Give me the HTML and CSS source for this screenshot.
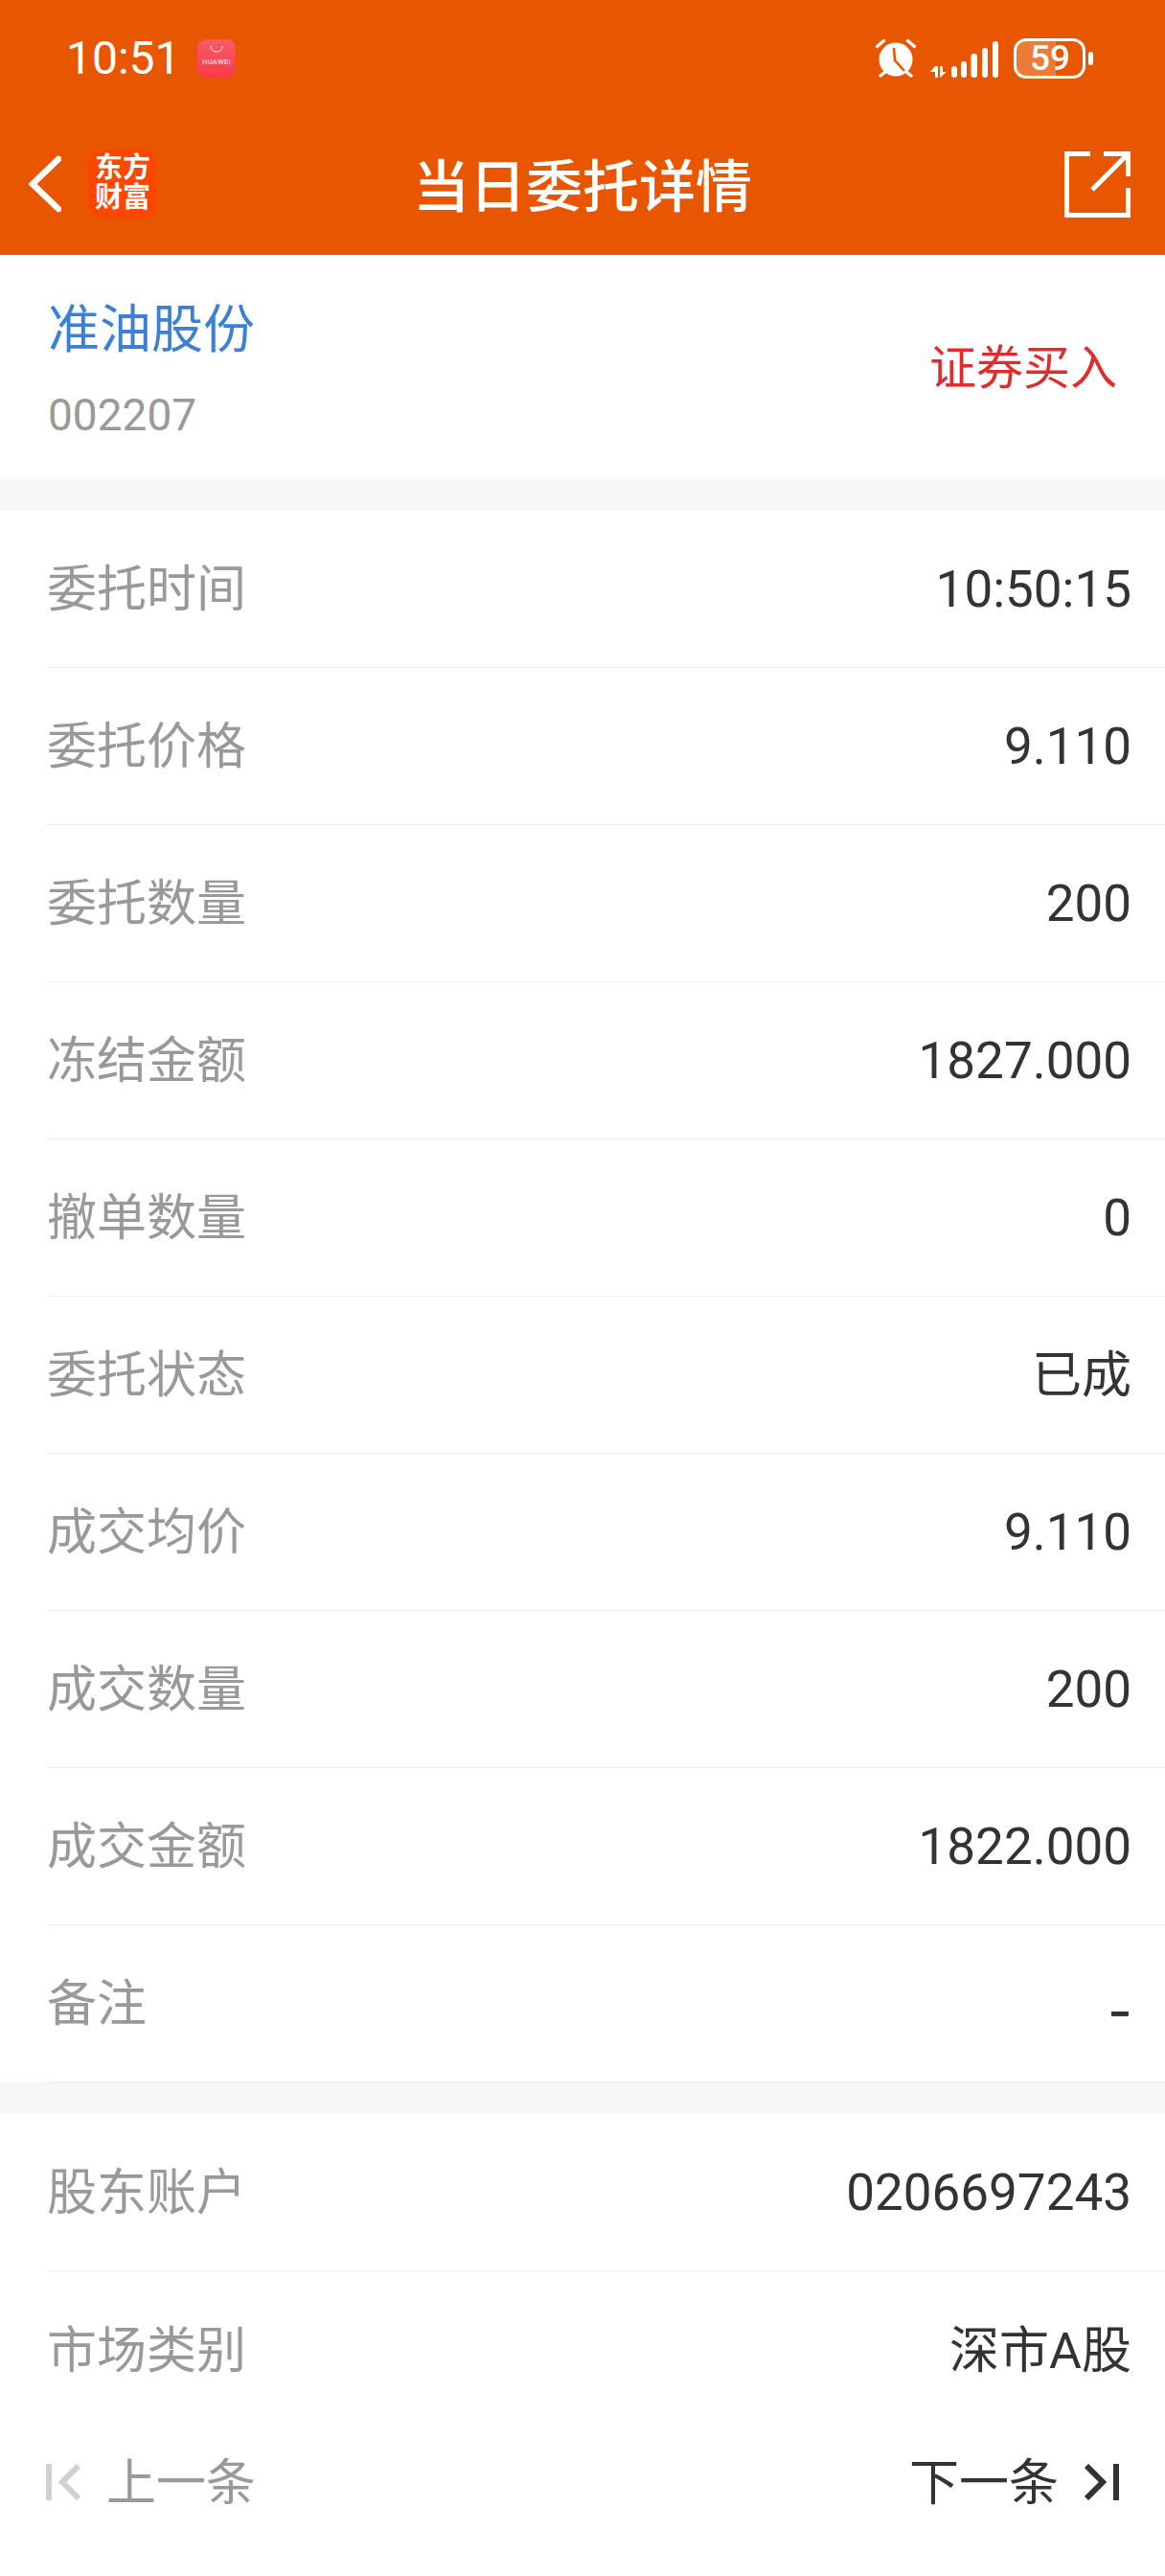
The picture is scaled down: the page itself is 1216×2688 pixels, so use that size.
FILE: index.html
```html
<!DOCTYPE html>
<html lang="zh-CN">
<head>
    <meta charset="UTF-8">
    <meta name="viewport" content="width=device-width, initial-scale=1.0">
    <title>当日委托详情</title>
    <link rel="stylesheet" href="styles.css">
</head>
<body>
    <div class="phone">
        <header class="top">
            <div class="status-bar">
                <div class="status-left">
                    <span class="clock">10:51</span>
                    <span class="store-icon">
                        <svg viewBox="0 0 40 40" width="40" height="40">
                            <defs>
                                <linearGradient id="storeFill" x1="0" y1="0" x2="0" y2="1">
                                    <stop offset="0" stop-color="#fb5a68"/>
                                    <stop offset="1" stop-color="#f93a48"/>
                                </linearGradient>
                            </defs>
                            <rect width="40" height="40" rx="9" fill="url(#storeFill)"/>
                            <path d="M14 7c0 8 12 8 12 0" fill="none" stroke="#fff" stroke-width="1"/>
                            <text x="20" y="26" class="store-label">HUAWEI</text>
                        </svg>
                    </span>
                </div>
                <div class="status-right">
                    <svg class="alarm" viewBox="0 0 42 42" width="42" height="42">
                        <circle cx="21" cy="22" r="17.5" fill="#fff"/>
                        <path d="M1.5 8.5 8.5 2.5M40.5 8.5 33.5 2.5M5 39l5-4M37 39l-5-4" stroke="#fff" stroke-width="3.4" stroke-linecap="round"/>
                        <path d="M19 10l1 13 10 11" fill="none" stroke="#e85600" stroke-width="2.6"/>
                    </svg>
                    <svg class="signal" viewBox="0 0 71 40" width="71" height="40">
                        <path d="M5 27h3v12H5V33H0ZM10 27h3v6h4L10 39Z" fill="#fff"/>
                        <rect x="22" y="27" width="6" height="12" rx="3" fill="#fff"/>
                        <rect x="32" y="22" width="6" height="17" rx="3" fill="#fff"/>
                        <rect x="42.5" y="14" width="6.5" height="25" rx="3" fill="#fff"/>
                        <rect x="54" y="8" width="6" height="31" rx="3" fill="#fff"/>
                        <rect x="65" y="1" width="6" height="38" rx="3" fill="#fff"/>
                    </svg>
                    <span class="battery">
                        <span class="battery-body">
                            <span class="battery-level"></span>
                            <span class="battery-num">59</span>
                        </span>
                        <span class="battery-cap"></span>
                    </span>
                </div>
            </div>
            <div class="nav-bar">
                <div class="nav-left">
                    <svg class="back" viewBox="0 0 36 60" width="36" height="60">
                        <path d="M33 4 6 30l27 26" fill="none" stroke="#fff" stroke-width="6.5" stroke-linecap="round" stroke-linejoin="miter"/>
                    </svg>
                    <span class="app-logo">东方<br>财富</span>
                </div>
                <h1 class="nav-title">当日委托详情</h1>
                <svg class="share" viewBox="0 0 69 69" width="69" height="69">
                    <path d="M27 2.500H2.500V66.500H66.500V38M41 2.500H66.500V26M66.500 2.500 29 40" fill="none" stroke="#fff" stroke-width="5"/>
                </svg>
            </div>
        </header>

        <section class="stock">
            <div class="stock-info">
                <div class="stock-name">准油股份</div>
                <div class="stock-code">002207</div>
            </div>
            <div class="stock-side">证券买入</div>
        </section>

        <section class="group">
            <div class="row"><span class="label">委托时间</span><span class="value">10:50:15</span></div>
            <div class="row"><span class="label">委托价格</span><span class="value">9.110</span></div>
            <div class="row"><span class="label">委托数量</span><span class="value">200</span></div>
            <div class="row"><span class="label">冻结金额</span><span class="value">1827.000</span></div>
            <div class="row"><span class="label">撤单数量</span><span class="value">0</span></div>
            <div class="row"><span class="label">委托状态</span><span class="value value-cjk">已成</span></div>
            <div class="row"><span class="label">成交均价</span><span class="value">9.110</span></div>
            <div class="row"><span class="label">成交数量</span><span class="value">200</span></div>
            <div class="row"><span class="label">成交金额</span><span class="value">1822.000</span></div>
            <div class="row"><span class="label">备注</span><span class="value value-dash">-</span></div>
        </section>

        <section class="group">
            <div class="row"><span class="label">股东账户</span><span class="value">0206697243</span></div>
            <div class="row"><span class="label">市场类别</span><span class="value value-cjk">深市A股</span></div>
        </section>

        <footer class="pager">
            <div class="pager-item prev">
                <svg viewBox="0 0 36 38" width="36" height="38">
                    <path d="M3 0V38" stroke="#d0d0d0" stroke-width="6"/>
                    <path d="M34 2 17 19l17 17" fill="none" stroke="#d0d0d0" stroke-width="6"/>
                </svg>
                <span>上一条</span>
            </div>
            <div class="pager-item next">
                <span>下一条</span>
                <svg viewBox="0 0 36 38" width="36" height="38">
                    <path d="M33 0V38" stroke="#333" stroke-width="6"/>
                    <path d="M2 2 19 19 2 36" fill="none" stroke="#333" stroke-width="6"/>
                </svg>
            </div>
        </footer>
    </div>
</body>
</html>
```

FILE: styles.css
```css
* {
    box-sizing: border-box;
}
body {
    margin: 0;
    background: #fff;
    font-family: Roboto, "Noto Sans CJK SC", sans-serif;
}
.phone {
    width: 1216px;
    height: 2688px;
    display: flex;
    flex-direction: column;
    overflow: hidden;
}

/* orange header */
.top {
    height: 266px;
    background: #e85600;
    color: #fff;
}
.status-bar {
    height: 124px;
    padding: 40px 75px 0 69px;
    display: flex;
    justify-content: space-between;
    align-items: flex-start;
}
.status-left {
    display: flex;
    align-items: center;
    gap: 17px;
}
.clock {
    font-size: 48px;
    line-height: 42px;
}
.store-icon {
    display: block;
    height: 40px;
}
.store-label {
    font-family: Roboto, sans-serif;
    font-size: 7.5px;
    letter-spacing: 0.4px;
    fill: #fff;
    text-anchor: middle;
}
.status-right {
    display: flex;
    align-items: flex-end;
}
.alarm {
    margin-right: 15px;
}
.signal {
    margin-right: 16px;
}
.battery {
    display: flex;
    align-items: center;
    gap: 3px;
    height: 42px;
}
.battery-body {
    position: relative;
    display: block;
    width: 75px;
    height: 42px;
    border: 3px solid #fff;
    border-radius: 13px;
    overflow: hidden;
}
.battery-level {
    position: absolute;
    left: 0;
    top: 0;
    bottom: 0;
    width: 59%;
    background: rgba(255, 255, 255, 0.22);
}
.battery-num {
    position: relative;
    display: block;
    padding-left: 14px;
    font-size: 37px;
    line-height: 36px;
    font-weight: 500;
}
.battery-cap {
    width: 5px;
    height: 14px;
    background: #fff;
    border-radius: 3px;
}
.nav-bar {
    position: relative;
    height: 142px;
    padding: 0 36px 0 28px;
    display: flex;
    justify-content: space-between;
    align-items: center;
    margin-top: -3px;
}
.nav-left {
    display: flex;
    align-items: center;
    gap: 28px;
}
.app-logo {
    width: 72px;
    height: 72px;
    background: #fb4700;
    border-radius: 14px;
    font-size: 29px;
    line-height: 31px;
    font-weight: 700;
    text-align: center;
    padding-top: 4px;
}
.nav-title {
    position: absolute;
    left: 0;
    right: 0;
    margin: 0;
    padding-bottom: 4px;
    text-align: center;
    font-size: 59px;
    font-weight: 500;
    pointer-events: none;
}

/* stock summary card */
.stock {
    height: 234px;
    padding: 0 50px;
    display: flex;
    justify-content: space-between;
    align-items: center;
}
.stock-info {
    padding-top: 7px;
}
.stock-name {
    font-size: 54px;
    line-height: 60px;
    color: #3a80d6;
}
.stock-code {
    margin-top: 32px;
    font-size: 46px;
    line-height: 52px;
    color: #999;
}
.stock-side {
    font-size: 49px;
    color: #e02c2c;
    padding-bottom: 8px;
}

/* detail rows */
.group {
    border-top: 33px solid #f6f7f9;
}
.row {
    height: 164px;
    margin-left: 49px;
    padding-right: 35px;
    display: flex;
    justify-content: space-between;
    align-items: center;
    border-bottom: 1px solid #efefef;
    font-size: 52px;
}
.group:last-of-type .row:last-child {
    border-bottom: none;
}
.label {
    color: #999;
    padding-bottom: 8px;
}
.value {
    color: #333;
    font-size: 53px;
}
.value-cjk {
    font-size: 52px;
    padding-bottom: 8px;
}
.value-dash {
    font-family: "Noto Sans CJK SC", sans-serif;
    font-size: 70px;
    font-weight: 400;
}

/* previous / next */
.pager {
    height: 154px;
    padding: 0 48px 42px;
    display: flex;
    justify-content: space-between;
    align-items: center;
    font-size: 52px;
    background: #fff;
}
.pager-item {
    display: flex;
    align-items: center;
    gap: 27px;
}
.pager-item span {
    padding-bottom: 8px;
}
.prev {
    color: #999;
}
.next {
    color: #333;
}
```
